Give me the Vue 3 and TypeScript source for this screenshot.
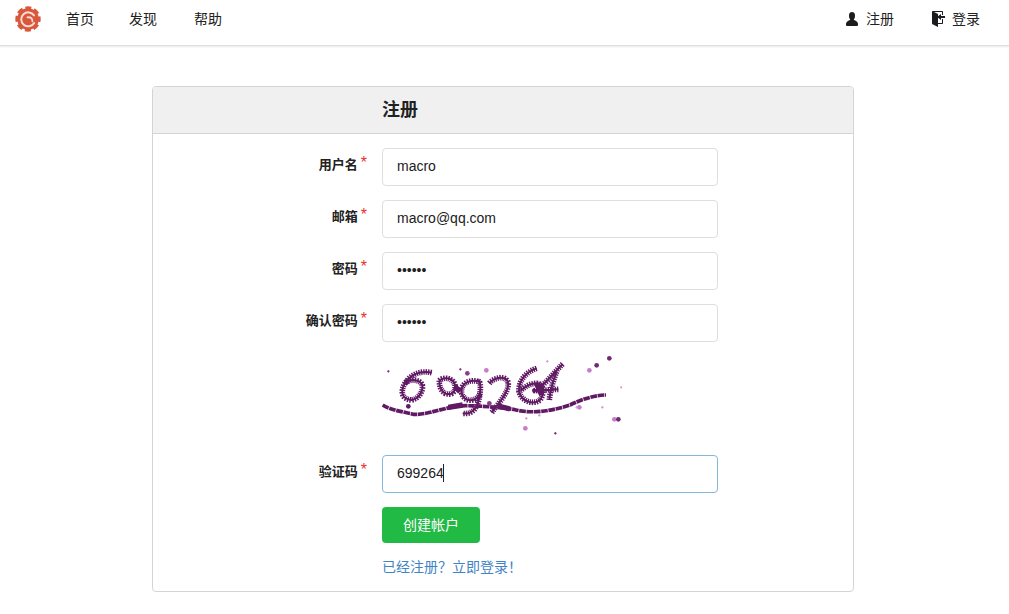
<script setup lang="ts">
interface Field {
  label: string
  type: string
  value: string
  focused?: boolean
}

const navLinks = ['首页', '发现', '帮助']

const topFields: Field[] = [
  { label: '用户名', type: 'text', value: 'macro' },
  { label: '邮箱', type: 'text', value: 'macro@qq.com' },
  { label: '密码', type: 'password', value: '123456' },
  { label: '确认密码', type: 'password', value: '123456' },
]

const captchaField: Field = { label: '验证码', type: 'text', value: '699264', focused: true }

// captcha noise, coordinates are 3x page pixels (same as the viewBox)
const blobs = [
  { x: 718, y: 25, r: 7, c: '#6f2a73' },
  { x: 680, y: 46, r: 7, c: '#6f2a73' },
  { x: 658, y: 61, r: 7, c: '#c77cc9' },
  { x: 349, y: 61, r: 7, c: '#c77cc9' },
  { x: 292, y: 70, r: 7, c: '#8a3d8c' },
  { x: 110, y: 95, r: 8, c: '#5f1a63' },
  { x: 115, y: 169, r: 7, c: '#5f1a63' },
  { x: 358, y: 160, r: 7, c: '#8a3d8c' },
  { x: 628, y: 172, r: 7, c: '#c77cc9' },
  { x: 733, y: 208, r: 7, c: '#c77cc9' },
  { x: 745, y: 208, r: 7, c: '#6f2a73' },
  { x: 466, y: 235, r: 7, c: '#c77cc9' },
]

const specks = [
  { x: 55, y: 64, c: '#8a3d8c' },
  { x: 271, y: 58, c: '#8a3d8c' },
  { x: 532, y: 34, c: '#d39ad5' },
  { x: 754, y: 112, c: '#d39ad5' },
  { x: 697, y: 172, c: '#d39ad5' },
  { x: 620, y: 172, c: '#d39ad5' },
  { x: 469, y: 205, c: '#d39ad5' },
  { x: 508, y: 196, c: '#d39ad5' },
  { x: 556, y: 250, c: '#6f2a73' },
]

const digitStrokes = [
  'M185 68 C150 60 120 75 105 100 C90 125 95 148 125 150 C150 145 160 120 157 105 C150 88 120 85 105 100',
  'M208 92 C222 78 250 85 255 105 C257 128 245 137 225 130 C212 122 208 108 208 92',
  'M330 96 C300 85 270 100 275 130 C285 160 320 155 330 130 C333 105 330 92 325 95 M330 130 C325 170 310 195 278 190',
  'M358 100 C375 80 410 75 415 100 C415 130 385 160 365 188',
  'M500 55 C470 65 445 90 447 125 C455 155 490 165 510 150 C525 130 520 100 500 100 C480 100 465 110 452 122',
  'M578 42 C550 70 520 110 495 122 L565 118 M560 65 C550 90 540 125 538 150',
]
</script>

<template>
  <div class="page">
    <header class="topbar">
      <svg class="logo" viewBox="0 0 26 26" aria-hidden="true">
        <circle cx="13" cy="13" r="10.8" fill="#d9583c" />
        <circle cx="13" cy="13" r="11.4" fill="none" stroke="#d9583c" stroke-width="2.6" stroke-dasharray="6 2.95" stroke-dashoffset="3" />
        <path d="M19 9.4 A7 7 0 1 0 19.2 17" fill="none" stroke="#f8ddd4" stroke-width="2" stroke-linecap="round" />
        <path d="M12.4 11.4 C15.4 10.8 17.6 12.4 17.4 15.4" fill="none" stroke="#f8ddd4" stroke-width="1.8" stroke-linecap="round" />
      </svg>
      <nav class="nav">
        <a v-for="link in navLinks" :key="link" class="nav-link">{{ link }}</a>
      </nav>
      <div class="nav-right">
        <a class="nav-link nav-link--icon">
          <svg class="nav-icon" viewBox="0 0 14 16" aria-hidden="true">
            <path transform="translate(1 0)" d="M12 14.002a.998.998 0 0 1-.998.998H1.001A1 1 0 0 1 0 13.999V13c0-2.633 4-4 4-4s.229-.409 0-1c-.841-.62-.944-1.59-1-4 .173-2.413 1.867-3 3-3s2.827.586 3 3c-.056 2.41-.159 3.38-1 4-.229.59 0 1 0 1s4 1.367 4 4v1.002z" fill="#1b1c1d" />
          </svg>
          注册
        </a>
        <a class="nav-link nav-link--icon">
          <svg class="nav-icon" viewBox="0 0 14 16" aria-hidden="true">
            <path d="M7 6.75V12h4V8h1v4c0 .55-.45 1-1 1H7v3l-5.45-2.72c-.33-.17-.55-.52-.55-.91V1c0-.55.45-1 1-1h9c.55 0 1 .45 1 1v3h-1V1H3l4 2v2.25L10 3v2h4v2h-4v2L7 6.75z" fill="#1b1c1d" />
          </svg>
          登录
        </a>
      </div>
    </header>

    <main class="card">
      <h2 class="card-head">注册</h2>
      <form class="card-body" @submit.prevent>
        <div v-for="field in topFields" :key="field.label" class="row">
          <label class="label">{{ field.label }}<span class="star">*</span></label>
          <input class="input" :type="field.type" :value="field.value" readonly />
        </div>

        <div class="row row--captcha">
          <span></span>
          <svg class="captcha" viewBox="36 18 720 240" aria-label="验证码图片">
            <g fill="none" stroke="#5f1a63" stroke-linejoin="round">
              <path v-for="d in digitStrokes" :key="d" :d="d" stroke-width="17" stroke-dasharray="4 3" />
              <path v-for="d in digitStrokes" :key="`core-${d}`" :d="d" stroke-width="6" />
            </g>
            <path d="M38 165 C60 180 100 185 130 193 C165 195 200 180 262 168 C300 165 370 170 430 178 C480 192 540 185 600 165 C640 145 680 135 708 135" fill="none" stroke="#5f1a63" stroke-width="11" stroke-dasharray="20 2" />
            <path d="M235 172 L278 165 M500 100 L515 135 M385 168 L420 177 M255 110 L270 125" fill="none" stroke="#5f1a63" stroke-width="16" />
            <circle v-for="b in blobs" :key="`${b.x}-${b.y}`" :cx="b.x" :cy="b.y" :r="b.r" :fill="b.c" />
            <path
              v-for="s in specks"
              :key="`s${s.x}-${s.y}`"
              :d="`M${s.x - 4} ${s.y} H${s.x + 4} M${s.x} ${s.y - 4} V${s.y + 4}`"
              :stroke="s.c"
              stroke-width="3"
              fill="none"
            />
          </svg>
        </div>

        <div class="row">
          <label class="label">{{ captchaField.label }}<span class="star">*</span></label>
          <div class="input-wrap">
            <input class="input input--focus" :type="captchaField.type" :value="captchaField.value" readonly />
            <span class="caret"></span>
          </div>
        </div>

        <div class="row">
          <span></span>
          <button class="submit" type="submit">创建帐户</button>
        </div>

        <div class="row row--link">
          <span></span>
          <a class="login-link">已经注册？立即登录！</a>
        </div>
      </form>
    </main>
  </div>
</template>

<style>
html,
body {
  margin: 0;
  background: #fff;
}
</style>

<style scoped>
.page {
  font-family: "Liberation Sans", "Noto Sans CJK SC", sans-serif;
  font-size: 14px;
  color: #212121;
  min-height: 614px;
  box-sizing: border-box;
  padding-bottom: 22px;
}

.topbar {
  display: flex;
  align-items: center;
  height: 46px;
  box-sizing: border-box;
  padding: 0 11px 7px 15px;
  border-bottom: 1px solid #dedede;
  box-shadow: 0 1px 2px rgba(34, 36, 38, 0.1);
}

.logo {
  width: 26px;
  height: 26px;
  flex: none;
  margin: -1px 7px 0 0;
}

.nav {
  display: flex;
  align-items: center;
}

.nav-link {
  padding: 0 18px;
  line-height: 20px;
  color: #212121;
}

.nav > .nav-link:nth-child(2) {
  margin: 0 1px 0 -1px;
}

.nav-right {
  display: flex;
  margin-left: auto;
  gap: 1px;
}

.nav-link--icon {
  display: flex;
  align-items: center;
  gap: 7px;
}

.nav-icon {
  width: 14px;
  height: 16px;
  flex: none;
}

.card {
  width: 702px;
  box-sizing: border-box;
  margin: 40px 0 0 152px;
  border: 1px solid #d4d4d5;
  border-radius: 4px;
}

.card-head {
  margin: 0;
  height: 47px;
  box-sizing: border-box;
  padding-left: 229px;
  font-size: 18px;
  line-height: 46px;
  font-weight: 700;
  color: #212121;
  background: #f0f0f0;
  border-bottom: 1px solid #d4d4d5;
  border-radius: 3px 3px 0 0;
}

.card-body {
  display: flex;
  flex-direction: column;
  gap: 14px;
  padding: 14px 0 14px;
}

.row {
  display: grid;
  grid-template-columns: 214px 336px;
  column-gap: 15px;
  align-items: center;
}

.row--captcha {
  height: 85px;
  align-items: start;
}

.row--link {
  line-height: 20px;
}

.label {
  text-align: right;
  font-size: 13px;
  font-weight: 700;
  padding-bottom: 8px;
  white-space: nowrap;
}

.star {
  color: #e8302a;
  font-weight: 400;
  font-size: 16px;
  margin-left: 3px;
  position: relative;
  top: -1px;
}

.input {
  display: block;
  width: 100%;
  height: 38px;
  box-sizing: border-box;
  padding: 0 14px 2px;
  font: inherit;
  color: #212121;
  background: #fff;
  border: 1px solid #dedede;
  border-radius: 4px;
  outline: none;
}

.input--focus {
  border-color: #85b7d9;
}

.input-wrap {
  position: relative;
}

.caret {
  position: absolute;
  left: 61px;
  top: 9px;
  width: 1px;
  height: 18px;
  background: #212121;
}

.captcha {
  display: block;
  width: 240px;
  height: 80px;
}

.submit {
  width: 98px;
  height: 36px;
  padding: 0 0 2px;
  font: inherit;
  color: #fff;
  background: #21ba45;
  border: 0;
  border-radius: 4px;
}

.login-link {
  color: #4183c4;
}
</style>
